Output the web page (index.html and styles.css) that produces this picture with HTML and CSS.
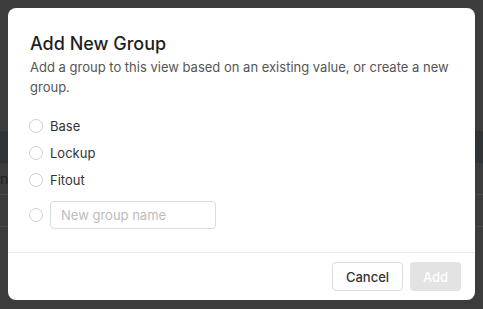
FILE: index.html
```html
<!DOCTYPE html>
<html lang="en">
<head>
  <meta charset="UTF-8" />
  <meta name="viewport" content="width=device-width, initial-scale=1.0"/>
  <title>Add New Group</title>
  <link rel="stylesheet" href="styles.css">
</head>
<body>
  <!-- Page behind the dialog -->
  <div class="page">
    <div class="page-top"></div>
    <div class="page-band"></div>
    <div class="page-row"><span class="page-text">ne</span></div>
    <div class="page-row"></div>
  </div>

  <!-- Dialog -->
  <div class="modal">
    <div class="modal-body">
      <h2 class="modal-title">Add New Group</h2>
      <p class="modal-desc">Add a group to this view based on an existing value, or create a new group.</p>

      <ul class="options">
        <li class="option"><span class="radio"></span><span>Base</span></li>
        <li class="option"><span class="radio"></span><span>Lockup</span></li>
        <li class="option"><span class="radio"></span><span>Fitout</span></li>
        <li class="option option-new">
          <span class="radio"></span>
          <input type="text" class="group-input" placeholder="New group name" />
        </li>
      </ul>
    </div>

    <div class="modal-footer">
      <button class="btn btn-cancel">Cancel</button>
      <button class="btn btn-add" disabled>Add</button>
    </div>
  </div>
</body>
</html>
```

FILE: styles.css
```css
* {
  box-sizing: border-box;
}

body {
  margin: 0;
  height: 309px;
  overflow: hidden;
  font-family: Inter, "Liberation Sans", Arial, sans-serif;
  background: #3c3c3c;
}

/* page behind the overlay */
.page-top {
  height: 131px;
}

.page-band {
  height: 32px;
  background: #2f3336;
}

.page-row {
  height: 32px;
  border-bottom: 1px solid #4a4a4a;
  display: flex;
  align-items: center;
}

.page-text {
  color: #1e1e1e;
  font-size: 14px;
}

/* dialog */
.modal {
  position: absolute;
  top: 8px;
  left: 8px;
  width: 467px;
  height: 292px;
  background: #fff;
  border-radius: 8px;
  display: flex;
  flex-direction: column;
}

.modal-body {
  flex: 1;
  padding: 24px 22px 0;
}

.modal-title {
  margin: 0;
  font-size: 18px;
  line-height: 24px;
  font-weight: 500;
  color: #1f1f1f;
}

.modal-desc {
  margin: 1px 0 0;
  font-size: 13px;
  line-height: 20px;
  color: #555;
}

.options {
  list-style: none;
  margin: 15px 0 0;
  padding: 0;
}

.option {
  display: flex;
  align-items: center;
  gap: 7px;
  height: 27px;
  font-size: 13px;
  color: #333;
}

.option-new {
  height: 28px;
  margin-top: 8px;
}

.radio {
  width: 14px;
  height: 14px;
  margin-left: -1px;
  border: 1px solid #d0d0d0;
  border-radius: 50%;
}

.group-input {
  width: 166px;
  height: 28px;
  padding: 0 10px;
  border: 1px solid #dcdcdc;
  border-radius: 4px;
  font-family: inherit;
  font-size: 13px;
  color: #333;
}

.group-input::placeholder {
  color: #bcbcbc;
}

.modal-footer {
  display: flex;
  justify-content: flex-end;
  gap: 7px;
  padding: 9px 14px;
  border-top: 1px solid #ececec;
}

.btn {
  height: 29px;
  border-radius: 4px;
  font-family: inherit;
  font-size: 13px;
  font-weight: 500;
}

.btn-cancel {
  width: 71px;
  background: #fff;
  border: 1px solid #dcdcdc;
  color: #333;
}

.btn-add {
  width: 51px;
  background: #e3e3e3;
  border: none;
  color: #fff;
}
```
